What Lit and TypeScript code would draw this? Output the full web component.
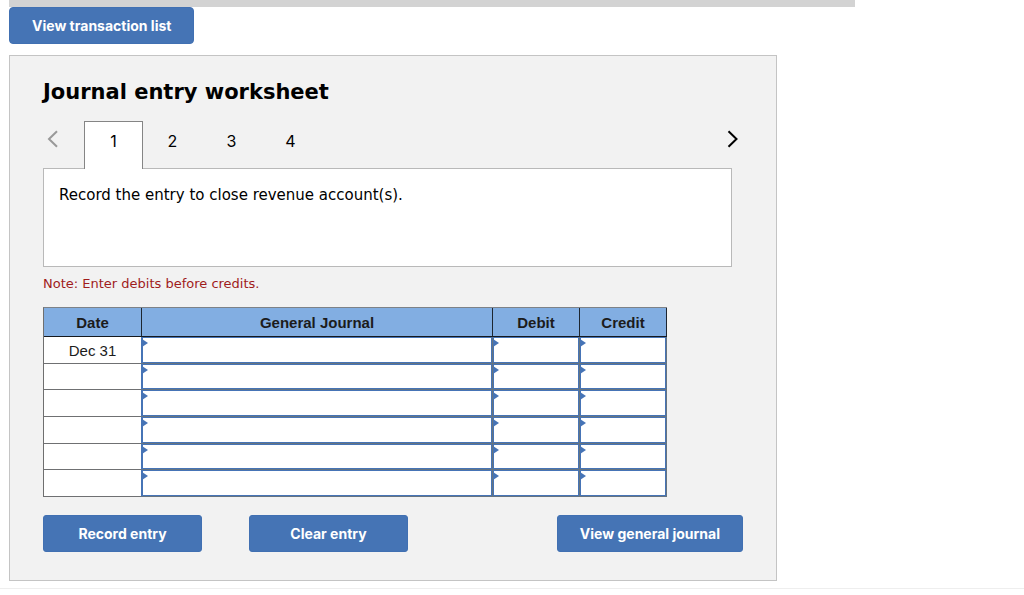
import { LitElement, html, css } from "lit";
import { customElement, state } from "lit/decorators.js";
import { classMap } from "lit/directives/class-map.js";

const STEPS = [1, 2, 3, 4];
const ROWS = ["Dec 31", "", "", "", "", ""];
const FIELDS = [
  { key: "journal", label: "General Journal" },
  { key: "debit", label: "Debit" },
  { key: "credit", label: "Credit" },
];

@customElement("journal-table")
class JournalTable extends LitElement {
  static styles = css`
    :host {
      display: block;
    }
    .grid {
      width: 100%;
      table-layout: fixed;
      border-collapse: separate;
      border-spacing: 0;
      border-left: 1px solid #6f6f6f;
      border-top: 1px solid #7d8288;
      font: 15px/18px "Liberation Sans", Arial, sans-serif;
      color: #1c1c1c;
    }
    .date {
      width: 98px;
    }
    .amount {
      width: 87px;
    }
    .head {
      box-sizing: border-box;
      height: 29px;
      padding: 2px 0 0;
      background: #82aee2;
      border-right: 1px solid #1d2630;
      border-bottom: 1px solid #15191e;
      font-weight: bold;
    }
    .cell {
      box-sizing: border-box;
      height: 27px;
      padding: 0;
      background: #fff;
      border-right: 1px solid #6b7077;
      border-bottom: 1px solid #6f7072;
      text-align: center;
    }
    .row:nth-child(3n + 2) .cell {
      height: 26px;
    }
    .day {
      padding-top: 2px;
      border-right-color: #4674b6;
    }
    .entry {
      position: relative;
      border-right-color: #667480;
      border-bottom-color: #667480;
    }
    .entry::before {
      content: "";
      position: absolute;
      left: 0;
      top: 2px;
      border-left: 6px solid #4674b6;
      border-top: 4px solid transparent;
      border-bottom: 4px solid transparent;
      pointer-events: none;
    }
    .field {
      display: block;
      box-sizing: border-box;
      width: 100%;
      height: 100%;
      margin: 0;
      padding: 0 10px;
      border: 1px solid #4674b6;
      border-radius: 0;
      background: #fff;
      font: inherit;
      color: inherit;
      outline: none;
    }
  `;

  render() {
    return html`
      <table class="grid">
        <thead>
          <tr>
            <th class="head date" scope="col">Date</th>
            <th class="head" scope="col">General Journal</th>
            <th class="head amount" scope="col">Debit</th>
            <th class="head amount" scope="col">Credit</th>
          </tr>
        </thead>
        <tbody>
          ${ROWS.map(
            (date, i) => html`<tr class="row">
              <td class="cell day">${date}</td>
              ${FIELDS.map(
                (f) => html`<td class="cell entry">
                  <input class="field" type="text" name="${f.key}-${i + 1}" aria-label="${f.label}, row ${i + 1}" />
                </td>`
              )}
            </tr>`
          )}
        </tbody>
      </table>
    `;
  }
}

@customElement("app-root")
class AppRoot extends LitElement {
  @state() private step = 1;

  static styles = css`
    :host {
      display: block;
      background: #fff;
      color: #000;
      font-family: "DejaVu Sans", Verdana, sans-serif;
    }
    .page {
      padding: 0 9px 7px;
      border-bottom: 1px solid #eee;
    }
    .bar {
      height: 7px;
      max-width: 846px;
      background: #d3d3d3;
    }
    .btn {
      box-sizing: border-box;
      height: 37px;
      min-width: 159px;
      padding: 0 22px;
      border: 1px solid #4170b2;
      border-radius: 3px;
      background: #4574b5;
      color: #fff;
      font: 700 14px/20px Inter, sans-serif;
      white-space: nowrap;
      cursor: pointer;
    }
    .list {
      display: block;
      border-radius: 4px;
    }
    .panel {
      box-sizing: border-box;
      max-width: 768px;
      margin-top: 11px;
      padding: 22px 33px 28px;
      border: 1px solid #c4c4c4;
      background: #f2f2f2;
    }
    .title {
      margin: 0;
      font-size: 21px;
      line-height: 28px;
      font-weight: bold;
    }
    .steps {
      display: flex;
      align-items: stretch;
      height: 47px;
      margin-top: 15px;
    }
    .tabs {
      display: flex;
      flex: 1;
    }
    .arrow {
      display: flex;
      justify-content: center;
      width: 20px;
      padding: 9px 0 0;
      border: 0;
      background: none;
      color: #000;
      cursor: pointer;
    }
    .prev {
      margin-right: 21px;
    }
    .arrow:disabled {
      color: #999;
      cursor: default;
    }
    .tab {
      box-sizing: border-box;
      width: 59px;
      padding: 0 0 9px;
      border: 1px solid transparent;
      border-bottom: 0;
      background: none;
      color: #000;
      font: 16px/20px Inter, sans-serif;
      cursor: pointer;
    }
    .tab.on {
      position: relative;
      margin-bottom: -1px;
      padding-bottom: 10px;
      border-color: #858585;
      background: #fff;
    }
    .task {
      box-sizing: border-box;
      min-height: 99px;
      margin-right: 11px;
      padding: 16px 15px;
      border: 1px solid #b9b9b9;
      background: #fff;
      font-size: 15px;
      line-height: 20px;
    }
    .text {
      margin: 0;
    }
    .note {
      margin: 7px 0 14px;
      color: #a01c1c;
      font-size: 13px;
      line-height: 19px;
    }
    .table {
      display: block;
      max-width: 624px;
    }
    .actions {
      display: flex;
      margin-top: 18px;
    }
    .clear {
      margin-left: 47px;
    }
    .journal {
      margin-left: auto;
    }
  `;

  private move(by: number) {
    this.step = Math.min(STEPS.length, Math.max(1, this.step + by));
  }

  render() {
    return html`
      <main class="page">
        <div class="bar"></div>
        <button class="btn list" type="button">View transaction list</button>
        <section class="panel">
          <h1 class="title">Journal entry worksheet</h1>
          <div class="steps">
            <button class="arrow prev" type="button" aria-label="Previous" ?disabled=${this.step === 1} @click=${() => this.move(-1)}>
              <svg width="12" height="18" viewBox="0 0 12 18" fill="none" stroke="currentColor" stroke-width="2">
                <path d="M10 1.200 2 9l8 7.800" />
              </svg>
            </button>
            <div class="tabs" role="tablist">
              ${STEPS.map(
                (n) => html`<button
                  class=${classMap({ tab: true, on: n === this.step })}
                  type="button"
                  role="tab"
                  aria-selected=${n === this.step ? "true" : "false"}
                  @click=${() => (this.step = n)}
                >${n}</button>`
              )}
            </div>
            <button class="arrow" type="button" aria-label="Next" ?disabled=${this.step === STEPS.length} @click=${() => this.move(1)}>
              <svg width="12" height="18" viewBox="0 0 12 18" fill="none" stroke="currentColor" stroke-width="2">
                <path d="M1.500 1.200 9.500 9l-8 7.800" />
              </svg>
            </button>
          </div>
          <div class="task">
            <p class="text">Record the entry to close revenue account(s).</p>
          </div>
          <p class="note">Note: Enter debits before credits.</p>
          <journal-table class="table"></journal-table>
          <div class="actions">
            <button class="btn" type="button">Record entry</button>
            <button class="btn clear" type="button">Clear entry</button>
            <button class="btn journal" type="button">View general journal</button>
          </div>
        </section>
      </main>
    `;
  }
}
